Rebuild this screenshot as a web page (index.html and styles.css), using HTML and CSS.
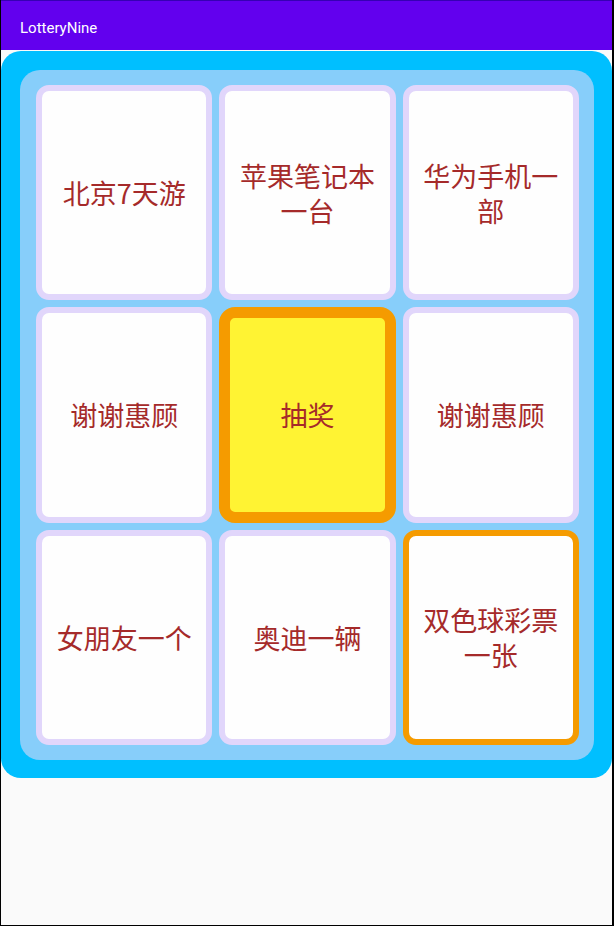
FILE: index.html
```html
<!DOCTYPE html>
<html lang="zh">
<head>
<meta charset="utf-8">
<title>LotteryNine</title>
<link rel="stylesheet" href="styles.css">
</head>
<body>
<div class="screen">
  <div class="statusbar"></div>
  <header class="toolbar"><span class="title">LotteryNine</span></header>
  <main class="content">
    <div class="outer">
      <div class="board">
        <div class="cell"><span>北京7天游</span></div>
        <div class="cell"><span>苹果笔记本一台</span></div>
        <div class="cell"><span>华为手机一部</span></div>
        <div class="cell"><span>谢谢惠顾</span></div>
        <div class="cell start"><span>抽奖</span></div>
        <div class="cell"><span>谢谢惠顾</span></div>
        <div class="cell"><span>女朋友一个</span></div>
        <div class="cell"><span>奥迪一辆</span></div>
        <div class="cell active"><span>双色球彩票一张</span></div>
      </div>
    </div>
  </main>
</div>
</body>
</html>
```

FILE: styles.css
```css
* { box-sizing: border-box; }
html, body {
  margin: 0;
  padding: 0;
  width: 614px;
  height: 926px;
  overflow: hidden;
  background: #fafafa;
}
.screen {
  width: 614px;
  height: 926px;
  border-left: 1px solid #000;
  border-right: 2px solid #000;
  border-bottom: 1px solid #000;
  background: #fafafa;
  display: flex;
  flex-direction: column;
}
.statusbar {
  height: 1px;
  background: #3700b3;
  flex: none;
}
.toolbar {
  height: 49px;
  flex: none;
  background: #6200ee;
  display: flex;
  align-items: center;
  padding-left: 19px;
}
.title {
  color: #fff;
  font-family: Roboto, "Noto Sans", sans-serif;
  font-weight: 400;
  font-size: 15px;
  position: relative;
  top: 2px;
}
.content {
  padding-top: 1px;
}
.outer {
  background: #00bfff;
  border-radius: 20px;
  padding: 19px 18px 18px 19px;
  height: 727px;
}
.board {
  background: #87cefa;
  border-radius: 20px;
  height: 690px;
  padding: 15px 15px 15px 16px;
  display: grid;
  grid-template-columns: repeat(3, 1fr);
  grid-template-rows: repeat(3, 1fr);
  gap: 7px;
}
.cell {
  background: #fefefe;
  border: 6px solid #e1d6fb;
  border-radius: 13px;
  display: flex;
  align-items: center;
  justify-content: center;
  padding: 0 6px;
  text-align: center;
  color: #a52a2a;
  font-family: "Noto Sans CJK SC", "Noto Sans", sans-serif;
  font-size: 27px;
  line-height: 35px;
}
.cell.start {
  background: #fff333;
  border: 11px solid #f59b00;
  border-radius: 16px;
}
.cell.active {
  border-color: #f59b00;
}
```
